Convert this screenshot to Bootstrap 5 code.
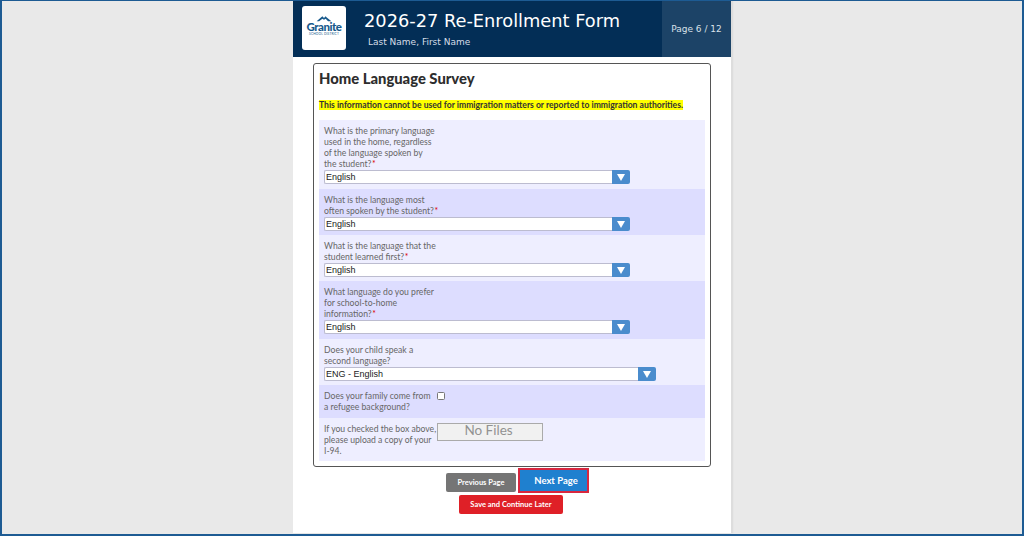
<!DOCTYPE html>
<html lang="en">
<head>
<meta charset="utf-8">
<title>2026-27 Re-Enrollment Form</title>
<link href="https://cdn.jsdelivr.net/npm/bootstrap@5.3.0/dist/css/bootstrap.min.css" rel="stylesheet">
<style>
html,body{height:536px;overflow:hidden;}
body{background:#e9e9e9;font-family:"Lato","Liberation Sans",sans-serif;}
.app-frame{height:536px;border:1px solid #1d5b93;border-width:1px 2px 2px 2px;overflow:hidden;}
.sheet{width:438px;height:100%;background:#fff;margin-left:291px;box-shadow:2px 0 1px #ddd;margin-top:-1px;}
.topbar{height:57px;background:#032e56;border-top:1px solid #0a4a80;}
.logo-box{width:44px;height:44px;background:#fff;border-radius:3px;margin:5px 0 0 9px;color:#17598c;}
.logo-box svg{display:block;width:18px;height:8px;margin-top:8px;}
.logo-word{font-size:11.5px;font-weight:900;line-height:9px;letter-spacing:-.5px;}
.logo-sub{font-size:3.2px;line-height:6px;letter-spacing:.15px;white-space:nowrap;}
.head-text{margin-left:18px;color:#fff;}
.form-title{font-family:"DejaVu Sans",sans-serif;font-size:17.8px;line-height:22px;margin:9px 0 0;font-weight:400;}
.student{font-family:"DejaVu Sans",sans-serif;font-size:9px;line-height:12px;margin:4px 0 0 4px;color:#d5dde6;}
.page-tag{width:69px;background:#1c4367;color:#d9e1e9;font-family:"DejaVu Sans",sans-serif;font-size:9px;padding-top:2px;}
.survey{width:398px;height:404px;margin:6px 0 0 20px;border:1px solid #555;border-radius:3px;padding:0 5px;}
.survey h2{font-size:14.8px;font-weight:900;color:#2d2d2d;line-height:20px;margin:4px 0 0;}
.notice{font-size:8.58px;font-weight:700;line-height:10px;color:#333;background:#ff0;display:block;width:max-content;white-space:nowrap;margin:12px 0 0;}
.q{padding:5px 5px 0;background:#eeeeff;}
.q.alt{background:#ddddff;}
.q-label{font-size:8.65px;line-height:11px;color:#666;white-space:nowrap;}
.req{color:#d00;margin-left:.5px;}
.pick{height:14px;width:306px;margin-top:1px;}
.pick.wide{width:332px;}
.pick select{appearance:none;-webkit-appearance:none;flex:1 1 auto;min-width:0;height:14px;border:1px solid #bcbcd0;border-right:0;background:#fff;font-family:"Liberation Sans",sans-serif;font-size:9px;line-height:12px;padding:0 0 1px 1px;color:#222;border-radius:2px 0 0 2px;}
.arrow{width:18px;height:14px;background:#4a8ccd;border-radius:0 2px 2px 0;}
.arrow svg{width:8px;height:7px;display:block;}
.r1{height:69px;margin-top:10px;}.r2{height:46px;}.r3{height:46px;}.r4{height:58px;}.r5{height:46px;}.r6{height:33px;}.r7{height:43px;}
.tick{width:8px;height:8px;border:1px solid #777;border-radius:1.5px;background:#fff;margin:2px 0 0 0;}
.no-files{width:106px;height:18px;border:1px solid #aaa;background:#f1f1f1;color:#929292;font-size:13.5px;line-height:12px;text-align:center;padding-right:3px;}
.q7-label{width:113px;}
.actions{height:25px;margin:1px 0 0 11px;}
.act{border:0;border-radius:2px;color:#fff;font-weight:700;padding:0;font-family:"Lato",sans-serif;}
.act-prev{width:70px;height:19px;background:#757575;font-size:7.5px;margin-top:5px;}
.act-next{width:71px;height:25px;background:#1f80cf;font-size:9.5px;margin-left:2px;border:2px solid #d8273f;border-radius:0;padding:1px 0 0 5px;}
.act-save{width:104px;height:19px;background:#df2027;font-size:7.5px;margin:2px 0 0 166px;display:block;}
</style>
</head>
<body>
<div class="app-frame">
  <div class="sheet">
    <header class="topbar d-flex">
      <div class="logo-box d-flex flex-column align-items-center">
        <svg viewBox="0 0 22 8" aria-hidden="true"><path d="M2 8 9 2l2 2 2-2 1 1 6 5h-4l-3-3-2 1-2-1-4 3z" fill="#17598c"/></svg>
        <div class="logo-word">Granite</div>
        <div class="logo-sub">SCHOOL DISTRICT</div>
      </div>
      <div class="head-text flex-grow-1">
        <h1 class="form-title">2026-27 Re-Enrollment Form</h1>
        <p class="student">Last Name, First Name</p>
      </div>
      <div class="page-tag d-flex align-items-center justify-content-center">Page 6 / 12</div>
    </header>
    <main class="survey">
      <h2>Home Language Survey</h2>
      <p class="notice">This information cannot be used for immigration matters or reported to immigration authorities.</p>
      <div class="q r1">
        <div class="q-label">What is the primary language<br>used in the home, regardless<br>of the language spoken by<br>the student?<span class="req">*</span></div>
        <div class="pick d-flex"><select><option>English</option></select><span class="arrow d-flex align-items-center justify-content-center"><svg viewBox="0 0 8 7"><path d="M0 0h8L4 7z" fill="#fff"/></svg></span></div>
      </div>
      <div class="q alt r2">
        <div class="q-label">What is the language most<br>often spoken by the student?<span class="req">*</span></div>
        <div class="pick d-flex"><select><option>English</option></select><span class="arrow d-flex align-items-center justify-content-center"><svg viewBox="0 0 8 7"><path d="M0 0h8L4 7z" fill="#fff"/></svg></span></div>
      </div>
      <div class="q r3">
        <div class="q-label">What is the language that the<br>student learned first?<span class="req">*</span></div>
        <div class="pick d-flex"><select><option>English</option></select><span class="arrow d-flex align-items-center justify-content-center"><svg viewBox="0 0 8 7"><path d="M0 0h8L4 7z" fill="#fff"/></svg></span></div>
      </div>
      <div class="q alt r4">
        <div class="q-label">What language do you prefer<br>for school-to-home<br>information?<span class="req">*</span></div>
        <div class="pick d-flex"><select><option>English</option></select><span class="arrow d-flex align-items-center justify-content-center"><svg viewBox="0 0 8 7"><path d="M0 0h8L4 7z" fill="#fff"/></svg></span></div>
      </div>
      <div class="q r5">
        <div class="q-label">Does your child speak a<br>second language?</div>
        <div class="pick wide d-flex"><select><option>ENG - English</option></select><span class="arrow d-flex align-items-center justify-content-center"><svg viewBox="0 0 8 7"><path d="M0 0h8L4 7z" fill="#fff"/></svg></span></div>
      </div>
      <div class="q alt r6 d-flex">
        <div class="q-label q7-label">Does your family come from<br>a refugee background?</div>
        <div class="tick"></div>
      </div>
      <div class="q r7 d-flex">
        <div class="q-label q7-label">If you checked the box above,<br>please upload a copy of your<br>I-94.</div>
        <div class="no-files">No Files</div>
      </div>
    </main>
    <div class="actions d-flex justify-content-center">
      <button class="act act-prev" type="button">Previous Page</button>
      <button class="act act-next" type="button">Next Page</button>
    </div>
    <button class="act act-save" type="button">Save and Continue Later</button>
  </div>
</div>
<script src="https://cdn.jsdelivr.net/npm/bootstrap@5.3.0/dist/js/bootstrap.bundle.min.js"></script>
</body>
</html>
